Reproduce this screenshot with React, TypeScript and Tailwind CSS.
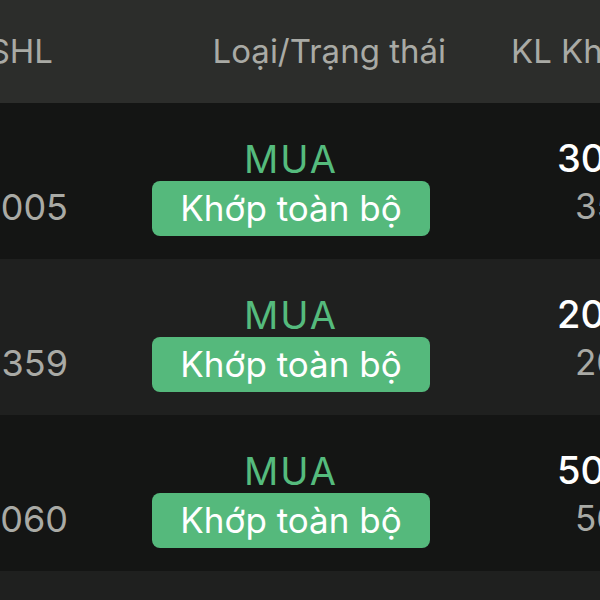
import React from "react";

interface OrderRow {
  id: string;
  side: string;
  status: string;
  qty: string;
  price: string;
}

const rows: OrderRow[] = [
  { id: "10005", side: "MUA", status: "Khớp toàn bộ", qty: "300", price: "35.50" },
  { id: "12359", side: "MUA", status: "Khớp toàn bộ", qty: "200", price: "20.15" },
  { id: "18060", side: "MUA", status: "Khớp toàn bộ", qty: "500", price: "56.00" },
];

const App: React.FC = () => {
  return (
    <div className="w-[600px] h-[600px] overflow-hidden bg-[#1f201f] font-['Inter','Roboto',sans-serif]">
      {/* header */}
      <div className="flex h-[103px] items-center bg-[#2c2d2b] text-[33px] text-[#a9aaa5]">
        <div className="w-[80px] shrink-0 flex justify-end pr-[27px] whitespace-nowrap">SHL</div>
        <div className="w-[422px] shrink-0 flex justify-end pr-[56px] whitespace-nowrap">Loại/Trạng thái</div>
        <div className="shrink-0 pl-[9px] whitespace-nowrap">KL Khớp</div>
      </div>

      {rows.map((row, i) => (
        <div
          key={row.id}
          className={
            "flex h-[156px] items-center " +
            (i % 2 === 0 ? "bg-[#141514]" : "bg-[#1f201f]")
          }
        >
          <div className="w-[80px] shrink-0 flex justify-end pr-[12px] pt-[52px] whitespace-nowrap text-[36px] text-[#a9aaa5]">
            {row.id}
          </div>
          <div className="w-[422px] shrink-0 flex flex-col items-center pt-[10px]">
            <span className="text-[38px] leading-[44px] text-[#55bb7d] tracking-[2px]">{row.side}</span>
            <span className="h-[55px] px-[28px] flex items-center rounded-[8px] bg-[#55b97c] text-[35px] text-white whitespace-nowrap">
              {row.status}
            </span>
          </div>
          <div className="shrink-0 flex flex-col items-start pl-[55px] whitespace-nowrap">
            <span className="text-[38px] leading-[44px] font-medium text-white">{row.qty}</span>
            <span className="pl-[18px] mt-[6px] text-[35px] leading-[40px] text-[#a9aaa5]">{row.price}</span>
          </div>
        </div>
      ))}
    </div>
  );
};

export default App;
